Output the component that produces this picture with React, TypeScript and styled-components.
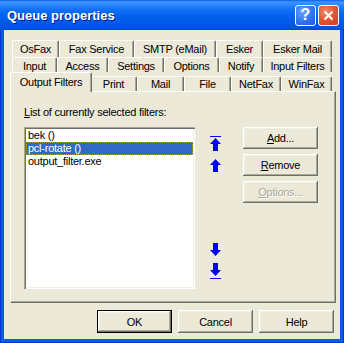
import React from "react";
import styled, { createGlobalStyle } from "styled-components";

const GlobalStyle = createGlobalStyle`
  html, body {
    margin: 0;
    padding: 0;
    background: #fff;
  }
  body {
    font-family: "Liberation Sans", Arial, sans-serif;
    font-size: 11px;
    letter-spacing: -0.25px;
    color: #000;
  }
`;

const Frame = styled.div`
  width: 344px;
  height: 343px;
  box-sizing: border-box;
  display: flex;
  flex-direction: column;
  background: #0a5ae6;
  box-shadow: inset 1px 0 #0831d9, inset -1px 0 #0831d9, inset 0 -1px #0831d9;
`;

const TitleBar = styled.div`
  height: 30px;
  flex: none;
  display: flex;
  align-items: center;
  padding: 0 5px 0 7px;
  background: linear-gradient(
    to bottom,
    #0a5fe8 0,
    #3d95ff 2px,
    #2a86fd 5px,
    #0f6ff5 10px,
    #0362ee 16px,
    #0058e6 24px,
    #0053e0 28px,
    #0048d0 30px
  );
`;

const Title = styled.div`
  flex: 1;
  color: #fff;
  font-weight: bold;
  font-size: 13px;
  letter-spacing: 0;
  text-shadow: 1px 1px #0a1883;
`;

const CaptionButton = styled.div<{ $close?: boolean }>`
  width: 21px;
  height: 21px;
  box-sizing: border-box;
  margin-left: 2px;
  border: 1px solid #fff;
  border-radius: 3px;
  display: flex;
  align-items: center;
  justify-content: center;
  color: #fff;
  font-weight: bold;
  font-size: 16px;
  letter-spacing: 0;
  background: ${(p) =>
    p.$close
      ? "radial-gradient(circle at 35% 30%, #f08c6c 0, #e05a35 45%, #c8401a 100%)"
      : "radial-gradient(circle at 35% 30%, #6fa6ff 0, #3a7bf0 45%, #1f55d8 100%)"};
`;

const Client = styled.div`
  flex: 1;
  margin: 0 4px 4px;
  background: #ece9d8;
  display: flex;
  flex-direction: column;
  padding: 10px 4px 0 6px;
`;

const TabArea = styled.div`
  display: flex;
  flex-direction: column;
`;

const TabRow = styled.div<{ $h: number }>`
  display: flex;
  align-items: flex-end;
  height: ${(p) => p.$h}px;
  margin-left: 2px;
  width: 320px;
  position: relative;
`;

const Tab = styled.div<{ $w: number; $h: number; $pt: number; $active?: boolean }>`
  width: ${(p) => p.$w}px;
  height: ${(p) => p.$h}px;
  flex: none;
  box-sizing: border-box;
  padding-top: ${(p) => p.$pt}px;
  line-height: 13px;
  text-align: center;
  white-space: nowrap;
  background: #ece9d8;
  border-top: 1px solid #fff;
  border-left: 1px solid #fff;
  border-right: 1px solid #716f64;
  border-radius: 2px 2px 0 0;
  box-shadow: inset -1px 0 #aca899;
  ${(p) =>
    p.$active &&
    `
    margin: 0 -2px -1px -2px;
    position: relative;
    z-index: 2;
  `}
`;

const Panel = styled.div`
  width: 326px;
  height: 212px;
  box-sizing: border-box;
  border: 1px solid;
  border-color: #fff #716f64 #716f64 #fff;
  box-shadow: inset -1px -1px #aca899;
  padding: 14px 0 0 13px;
  display: flex;
  flex-direction: column;
`;

const Label = styled.div`
  line-height: 13px;
  margin-bottom: 8px;
`;

const ContentRow = styled.div`
  display: flex;
`;

const ListBox = styled.div`
  width: 171px;
  height: 162px;
  box-sizing: border-box;
  padding: 2px;
  background: #fff;
  box-shadow: inset 1px 1px #aca899, inset 2px 2px #716f64, inset -1px -1px #fff,
    inset -2px -2px #f1efe2;
`;

const ListItem = styled.div<{ $selected?: boolean }>`
  height: 13px;
  line-height: 13px;
  padding-left: 2px;
  white-space: nowrap;
  ${(p) =>
    p.$selected &&
    `
    background: #316ac5;
    color: #fff;
    outline: 1px dotted #ce953a;
    outline-offset: -1px;
  `}
`;

const ArrowColumn = styled.div`
  width: 12px;
  margin-left: 15px;
  padding: 9px 0 10px;
  display: flex;
  flex-direction: column;
  justify-content: space-between;
`;

const ArrowGroup = styled.div`
  display: flex;
  flex-direction: column;
  gap: 5px;
`;

const ButtonColumn = styled.div`
  margin-left: 21px;
  display: flex;
  flex-direction: column;
  gap: 5px;
`;

const Button = styled.div<{ $default?: boolean; $disabled?: boolean; $h?: number }>`
  width: 75px;
  height: ${(p) => p.$h ?? 22}px;
  box-sizing: border-box;
  display: flex;
  align-items: center;
  justify-content: center;
  background: #ece9d8;
  border: ${(p) => (p.$default ? "1px solid #000" : "none")};
  box-shadow: inset -1px -1px #716f64, inset 1px 1px #fff, inset -2px -2px #aca899,
    inset 2px 2px #f1efe2;
  color: ${(p) => (p.$disabled ? "#aca899" : "#000")};
  text-shadow: ${(p) => (p.$disabled ? "1px 1px #fff" : "none")};
`;

const Footer = styled.div`
  display: flex;
  justify-content: flex-end;
  gap: 6px;
  margin-top: 7px;
  margin-right: 2px;
`;

const ArrowIcon = ({ dir, bar }: { dir: "up" | "down"; bar?: boolean }) => {
  const up = "5.5,0 11,6 8,6 8,13 3,13 3,6 0,6";
  const down = "3,0 8,0 8,7 11,7 5.5,13 0,7 3,7";
  return (
    <svg width="11" height="16" viewBox="0 0 11 16">
      {dir === "up" ? (
        <g fill="#0000ff">
          {bar && <rect x="0" y="0" width="11" height="1" />}
          <polygon points={up} transform="translate(0,2)" />
        </g>
      ) : (
        <g fill="#0000ff">
          <polygon points={down} transform={bar ? "translate(0,0)" : "translate(0,1)"} />
          {bar && <rect x="0" y="15" width="11" height="1" />}
        </g>
      )}
    </svg>
  );
};

const rows = [
  {
    h: 17,
    tabs: [
      { t: "OsFax", w: 47 },
      { t: "Fax Service", w: 75 },
      { t: "SMTP (eMail)", w: 82 },
      { t: "Esker", w: 47 },
      { t: "Esker Mail", w: 69 },
    ],
  },
  {
    h: 15,
    tabs: [
      { t: "Input", w: 45 },
      { t: "Access", w: 51 },
      { t: "Settings", w: 56 },
      { t: "Options", w: 55 },
      { t: "Notify", w: 44 },
      { t: "Input Filters", w: 69 },
    ],
  },
];

const frontRow = [
  { t: "Output Filters", w: 82, active: true },
  { t: "Print", w: 47 },
  { t: "Mail", w: 47 },
  { t: "File", w: 47 },
  { t: "NetFax", w: 50 },
  { t: "WinFax", w: 51 },
];

export default function App() {
  return (
    <>
      <GlobalStyle />
      <Frame>
        <TitleBar>
          <Title>Queue properties</Title>
          <CaptionButton>?</CaptionButton>
          <CaptionButton $close>
            <svg width="11" height="11" viewBox="0 0 11 11">
              <path d="M1.5 1.5 L9.5 9.5 M9.5 1.5 L1.5 9.5" stroke="#fff" strokeWidth="2" />
            </svg>
          </CaptionButton>
        </TitleBar>
        <Client>
          <TabArea>
            {rows.map((r, i) => (
              <TabRow key={i} $h={r.h}>
                {r.tabs.map((tab) => (
                  <Tab key={tab.t} $w={tab.w} $h={r.h} $pt={2}>
                    {tab.t}
                  </Tab>
                ))}
              </TabRow>
            ))}
            <TabRow $h={19}>
              {frontRow.map((tab) =>
                tab.active ? (
                  <Tab key={tab.t} $w={tab.w} $h={20} $pt={3} $active>
                    {tab.t}
                  </Tab>
                ) : (
                  <Tab key={tab.t} $w={tab.w} $h={15} $pt={1}>
                    {tab.t}
                  </Tab>
                )
              )}
            </TabRow>
            <Panel>
              <Label>
                <u>L</u>ist of currently selected filters:
              </Label>
              <ContentRow>
                <ListBox>
                  <ListItem>bek ()</ListItem>
                  <ListItem $selected>pcl-rotate ()</ListItem>
                  <ListItem>output_filter.exe</ListItem>
                </ListBox>
                <ArrowColumn>
                  <ArrowGroup>
                    <ArrowIcon dir="up" bar />
                    <ArrowIcon dir="up" />
                  </ArrowGroup>
                  <ArrowGroup>
                    <ArrowIcon dir="down" />
                    <ArrowIcon dir="down" bar />
                  </ArrowGroup>
                </ArrowColumn>
                <ButtonColumn>
                  <Button>
                    <span>
                      <u>A</u>dd...
                    </span>
                  </Button>
                  <Button>
                    <span>
                      <u>R</u>emove
                    </span>
                  </Button>
                  <Button $disabled>
                    <span>
                      <u>O</u>ptions...
                    </span>
                  </Button>
                </ButtonColumn>
              </ContentRow>
            </Panel>
          </TabArea>
          <Footer>
            <Button $default $h={23}>OK</Button>
            <Button $h={23}>Cancel</Button>
            <Button $h={23}>Help</Button>
          </Footer>
        </Client>
      </Frame>
    </>
  );
}
